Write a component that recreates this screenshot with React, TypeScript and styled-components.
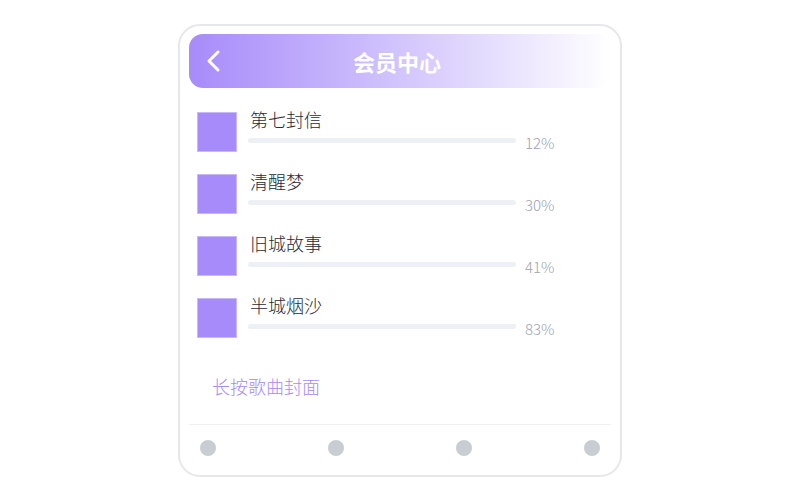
import React from 'react';
import styled, {createGlobalStyle} from 'styled-components';

const GlobalStyle = createGlobalStyle`
    body {
        margin: 0;
        background: #ffffff;
        font-family: "Noto Sans CJK SC", sans-serif;
    }
`;

const Page = styled.div`
    display: flex;
    justify-content: center;
    padding-top: 24px;
`;

const Card = styled.div`
    box-sizing: border-box;
    width: 444px;
    height: 453px;
    padding: 8px 9px 0;
    border: 2px solid #e6e7eb;
    border-radius: 22px;
    background: #ffffff;
    display: flex;
    flex-direction: column;
`;

const Header = styled.div`
    position: relative;
    height: 54px;
    border-radius: 14px;
    background: linear-gradient(90deg, #a78bfa 0%, #c9b9fc 40%, #ffffff 100%);
    display: flex;
    align-items: center;
    justify-content: center;
`;

const BackButton = styled.button`
    position: absolute;
    left: 16px;
    top: 50%;
    transform: translateY(-50%);
    background: none;
    border: none;
    padding: 0;
    display: flex;
    cursor: pointer;
`;

const Title = styled.h1`
    margin: 0 6px 0 0;
    color: #ffffff;
    font-size: 22px;
    font-weight: 700;
`;

const SongList = styled.ul`
    list-style: none;
    margin: 24px 0 0;
    padding: 0 56px 0 8px;
    display: flex;
    flex-direction: column;
    gap: 22px;
`;

const SongRow = styled.li`
    display: flex;
    align-items: flex-start;
    gap: 11px;
    height: 40px;
`;

const Cover = styled.div`
    box-sizing: border-box;
    width: 40px;
    height: 40px;
    flex-shrink: 0;
    background: #a78bfa;
    border: 1px solid #c8b8fc;
`;

const Info = styled.div`
    flex: 1;
    display: flex;
    flex-direction: column;
`;

const SongName = styled.div`
    color: #262b36;
    font-size: 18px;
    font-weight: 300;
    line-height: 20px;
    margin-top: -3px;
    padding-left: 2px;
`;

const ProgressLine = styled.div`
    display: flex;
    align-items: center;
    gap: 9px;
    margin-top: 1px;
`;

const Track = styled.div`
    flex: 1;
    height: 5px;
    border-radius: 3px;
    background: #edf0f4;
    overflow: hidden;
`;

const Percent = styled.span`
    color: #9ca3af;
    font-size: 15px;
    font-weight: 300;
    line-height: 16px;
    margin-top: 5px;
    width: 30px;
`;

const Hint = styled.div`
    margin: 35px 0 0 23px;
    color: #a78bfa;
    font-size: 18px;
    font-weight: 300;
`;

const Footer = styled.div`
    margin-top: auto;
    height: 50px;
    border-top: 1px solid #eef0f3;
    padding: 0 11px;
    display: flex;
    align-items: center;
    justify-content: space-between;
`;

const Dot = styled.span`
    width: 16px;
    height: 16px;
    border-radius: 50%;
    background: #c8cdd4;
    margin-top: -4px;
`;

const songs = [
    {name: '第七封信', pct: 12},
    {name: '清醒梦', pct: 30},
    {name: '旧城故事', pct: 41},
    {name: '半城烟沙', pct: 83},
];

export default function App() {
    return (
        <Page>
            <GlobalStyle/>
            <Card>
                <Header>
                    <BackButton aria-label="返回">
                        <svg width="16" height="24" viewBox="0 0 16 24" fill="none">
                            <path d="M13 3 L4 12 L13 21" stroke="#ffffff" strokeWidth="3" strokeLinecap="round" strokeLinejoin="round"/>
                        </svg>
                    </BackButton>
                    <Title>会员中心</Title>
                </Header>
                <SongList>
                    {songs.map(s => (
                        <SongRow key={s.name}>
                            <Cover/>
                            <Info>
                                <SongName>{s.name}</SongName>
                                <ProgressLine>
                                    <Track/>
                                    <Percent>{s.pct}%</Percent>
                                </ProgressLine>
                            </Info>
                        </SongRow>
                    ))}
                </SongList>
                <Hint>长按歌曲封面</Hint>
                <Footer>
                    <Dot/>
                    <Dot/>
                    <Dot/>
                    <Dot/>
                </Footer>
            </Card>
        </Page>
    );
}
